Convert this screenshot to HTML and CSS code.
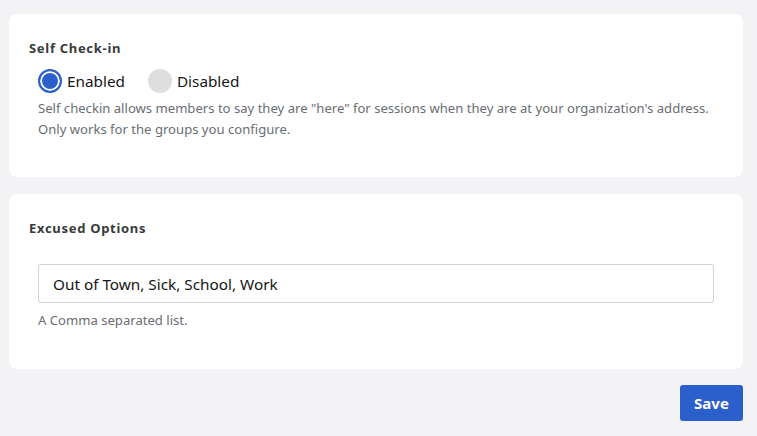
FILE: index.html
```html
<!DOCTYPE html>
<html>
<head>
<meta charset="utf-8">
<link rel="stylesheet" href="styles.css">
</head>
<body>
<div class="page">
  <section class="card card-checkin">
    <h2 class="card-title">Self Check-in</h2>
    <div class="field">
      <div class="radios">
        <label class="radio"><span class="dot dot-on"></span><span class="radio-label">Enabled</span></label>
        <label class="radio"><span class="dot dot-off"></span><span class="radio-label">Disabled</span></label>
      </div>
      <p class="help">Self checkin allows members to say they are "here" for sessions when they are at your organization's address.<br>Only works for the groups you configure.</p>
    </div>
  </section>
  <section class="card card-excused">
    <h2 class="card-title">Excused Options</h2>
    <div class="field field-input">
      <div class="input">Out of Town, Sick, School, Work</div>
      <p class="help help-small">A Comma separated list.</p>
    </div>
  </section>
  <div class="actions">
    <button class="btn">Save</button>
  </div>
</div>
</body>
</html>
```

FILE: styles.css
```css
* { box-sizing: border-box; }
html, body { margin: 0; padding: 0; }
body {
  background: #f3f3f6;
  font-family: "Noto Sans", "Open Sans", sans-serif;
  color: #151515;
  width: 757px;
  height: 436px;
  overflow: hidden;
}
.page {
  padding: 14px 14px 0 9px;
  display: flex;
  flex-direction: column;
}
.card {
  background: #ffffff;
  border-radius: 8px;
  padding: 0 20px 0 20px;
}
.card-checkin { height: 163px; padding-top: 26px; }
.card-excused { height: 175px; margin-top: 17px; padding-top: 26px; }
.card-title {
  margin: 0;
  font-size: 13px;
  font-weight: 700;
  letter-spacing: 0.7px;
  color: #3a3a3a;
  line-height: 16px;
}
.field { padding-left: 9px; }
.radios {
  display: flex;
  gap: 23px;
  margin-top: 13px;
}
.radio {
  display: flex;
  align-items: center;
  gap: 5px;
  height: 24px;
}
.dot {
  width: 24px;
  height: 24px;
  border-radius: 50%;
  display: block;
}
.dot-on {
  background: #2b60cc;
  border: 2px solid #2b60cc;
  box-shadow: inset 0 0 0 2px #ffffff;
}
.dot-off { background: #dedede; }
.radio-label { font-size: 15.3px; color: #151515; }
.help {
  margin: 5px 0 0 0;
  font-size: 13.1px;
  line-height: 21px;
  color: #6a6e73;
}
.field-input { padding-top: 28px; padding-right: 9px; }
.input {
  height: 39px;
  border: 1px solid #d2d2d2;
  border-radius: 3px;
  padding: 0 14px;
  display: flex;
  align-items: center;
  font-size: 15.3px;
  color: #151515;
}
.help-small { margin-top: 7px; line-height: 20px; }
.actions {
  display: flex;
  justify-content: flex-end;
  margin-top: 16px;
}
.btn {
  width: 63px;
  height: 36px;
  background: #2b5fcb;
  color: #fff;
  border: 0;
  border-radius: 3px;
  font-family: inherit;
  font-size: 15px;
  font-weight: 700;
  padding: 0;
}
```
